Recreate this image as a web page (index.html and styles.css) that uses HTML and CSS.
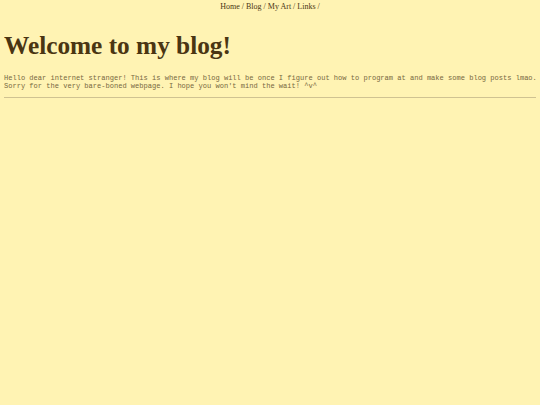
FILE: index.html
```html
<!DOCTYPE html>
<html>
<head>
<meta charset="utf-8">
<link rel="stylesheet" href="styles.css">
</head>
<body>
<nav class="nav">Home / Blog / My Art / Links /</nav>
<h1 class="title">Welcome to my blog!</h1>
<p class="intro">Hello dear internet stranger! This is where my blog will be once I figure out how to program at and make some blog posts lmao.<br>Sorry for the very bare-boned webpage. I hope you won't mind the wait! ^v^</p>
<hr class="rule">
</body>
</html>
```
FILE: styles.css
```css
html, body {
  background: #fff3b3;
}
body {
  margin: 0 4px;
  color: #4a3512;
  font-family: "Liberation Serif", serif;
}
.nav {
  text-align: center;
  font-size: 8px;
  line-height: 10px;
  padding-top: 2px;
}
.title {
  font-size: 25.3px;
  font-weight: bold;
  line-height: 30px;
  margin: 18px 0 0;
}
.intro {
  font-family: "Liberation Mono", monospace;
  font-size: 7.05px;
  line-height: 8px;
  margin: 14px 0 0;
  white-space: nowrap;
  color: #77683f;
}
.rule {
  border: 0;
  border-top: 1px solid #cfc291;
  margin: 7px 0 0;
}
```
